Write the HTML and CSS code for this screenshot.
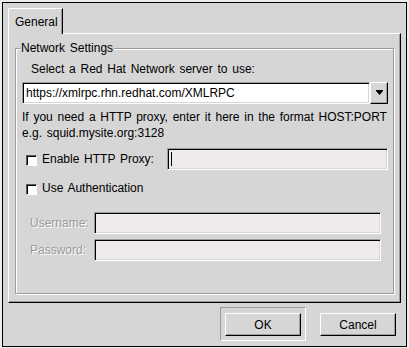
FILE: index.html
```html
<!DOCTYPE html>
<html lang="en">
<head>
<meta charset="UTF-8" />
<title>Network Configuration</title>
<link rel="stylesheet" href="styles.css">
</head>
<body>

<div class="window">
  <div class="dialog">
    <div class="notebook">
      <div class="tabs">
        <div class="tab">General</div>
      </div>
      <div class="page">
        <fieldset class="group">
          <legend>Network Settings</legend>
          <div class="hint">Select a Red Hat Network server to use:</div>
          <div class="combo">
            <div class="entry combo-entry">https://xmlrpc.rhn.redhat.com/XMLRPC</div>
            <div class="combo-btn">
              <svg width="7" height="5" viewBox="0 0 7 5"><path d="M0 0h7v1l-3.5 4-3.5-4z" fill="#000"/></svg>
            </div>
          </div>
          <p class="note">If you need a HTTP proxy, enter it here in the format HOST:PORT<br>e.g. squid.mysite.org:3128</p>
          <div class="row proxy-row">
            <label class="check"><span class="box"></span>Enable HTTP Proxy:</label>
            <div class="entry off proxy-entry"><span class="caret"></span></div>
          </div>
          <div class="row auth-row">
            <label class="check"><span class="box"></span>Use Authentication</label>
          </div>
          <div class="creds">
            <span class="lbl">Username:</span>
            <div class="entry off"></div>
            <span class="lbl">Password:</span>
            <div class="entry off"></div>
          </div>
        </fieldset>
      </div>
    </div>

    <div class="actions">
      <div class="defbox is-default"><button class="btn">OK</button></div>
      <div class="defbox"><button class="btn">Cancel</button></div>
    </div>
  </div>
</div>

</body>
</html>
```

FILE: styles.css
```css
body {
  margin: 0;
  background: #d6d6d6;
  font-family: "Liberation Sans", Arial, sans-serif;
  font-size: 12px;
  word-spacing: 1.4px;
  color: #000;
}
.window {
  width: 409px;
  height: 348px;
  box-sizing: border-box;
  border: 2px solid #ececec;
  border-bottom-width: 1px;
}
.dialog {
  height: 100%;
  box-sizing: border-box;
  border: 1px solid #000;
  padding: 5px;
  display: flex;
  flex-direction: column;
  gap: 4px;
}

/* notebook */
.notebook {
  flex: 1;
  display: flex;
  flex-direction: column;
}
.tabs {
  display: flex;
  position: relative;
  z-index: 1;
  margin-bottom: -1px;
}
.tab {
  width: 55px;
  height: 26px;
  box-sizing: border-box;
  padding: 6px 0 0 6px;
  line-height: 14px;
  background: #d6d6d6;
  border-left: 1px solid #fff;
  border-top: 1px solid #fff;
  border-right: 1px solid #000;
  border-top-left-radius: 2px;
  box-shadow: inset -1px 0 0 #9c9c9c;
}
.page {
  flex: 1;
  display: flex;
  flex-direction: column;
  border: 1px solid;
  border-color: #fff #000 #000 #fff;
  box-shadow: inset -1px -1px 0 #9c9c9c;
  padding: 7px 6px 8px 6px;
}

/* etched frame */
.group {
  flex: 1;
  margin: 0;
  min-width: 0;
  padding: 0 5px 0 6px;
  border: 1px solid #9c9c9c;
  box-shadow: 1px 1px 0 #fff, inset 1px 1px 0 #fff;
}
.group legend {
  margin-left: -2px;
  padding: 0 1px;
  line-height: 14px;
  background: #d6d6d6;
}
.hint {
  margin-top: 7px;
  padding-left: 9px;
  line-height: 14px;
}

/* entries */
.entry {
  height: 22px;
  box-sizing: border-box;
  border: 1px solid;
  border-color: #9c9c9c #fff #fff #9c9c9c;
  box-shadow: inset 1px 1px 0 #000, inset -1px -1px 0 #d6d6d6;
  background: #fff;
}
.entry.off {
  background: #eeeaee;
}
.combo {
  margin-top: 6px;
  display: flex;
  height: 22px;
}
.combo-entry {
  flex: 1;
  padding-left: 3px;
  line-height: 20px;
}
.combo-btn {
  width: 18px;
  box-sizing: border-box;
  border: 1px solid;
  border-color: #fff #000 #000 #fff;
  box-shadow: inset -1px -1px 0 #9c9c9c;
  display: flex;
  align-items: center;
  justify-content: center;
}
.combo-btn svg {
  display: block;
  margin-top: -1px;
}
.note {
  margin: 5px 0 0;
  line-height: 16px;
}

/* check rows */
.row {
  display: flex;
  align-items: center;
}
.proxy-row {
  margin-top: 7px;
  height: 22px;
}
.auth-row {
  margin-top: 8px;
  height: 20px;
}
.check {
  display: flex;
  align-items: center;
  gap: 5px;
  padding-left: 4px;
  line-height: 14px;
}
.box {
  width: 11px;
  height: 11px;
  box-sizing: border-box;
  border: 1px solid;
  border-color: #5a5a5a #fff #fff #5a5a5a;
  box-shadow: inset 1px 1px 0 #000;
  background: #fff;
  margin-top: 2px;
}
.proxy-entry {
  margin-left: auto;
  width: 221px;
  padding: 3px 0 0 3px;
}
.caret {
  display: block;
  width: 1px;
  height: 14px;
  background: #000;
}

.creds {
  margin-top: 14px;
  display: grid;
  grid-template-columns: 58px 1fr;
  column-gap: 6px;
  row-gap: 5px;
  padding: 0 7px 0 8px;
}
.lbl {
  line-height: 22px;
  color: #9c9a9c;
  text-shadow: 1px 1px 0 #fff;
}

/* buttons */
.actions {
  display: flex;
  justify-content: flex-end;
  gap: 9px;
}
.defbox {
  width: 86px;
  height: 34px;
  box-sizing: border-box;
  border: 1px solid transparent;
  padding: 5px 4px 4px;
}
.defbox.is-default {
  border-color: #9c9c9c #fff #fff #9c9c9c;
}
.btn {
  width: 76px;
  height: 23px;
  box-sizing: border-box;
  padding: 0;
  border: 1px solid;
  border-color: #fff #000 #000 #fff;
  box-shadow: inset -1px -1px 0 #9c9c9c;
  background: #d6d6d6;
  font: inherit;
  color: #000;
}
```
